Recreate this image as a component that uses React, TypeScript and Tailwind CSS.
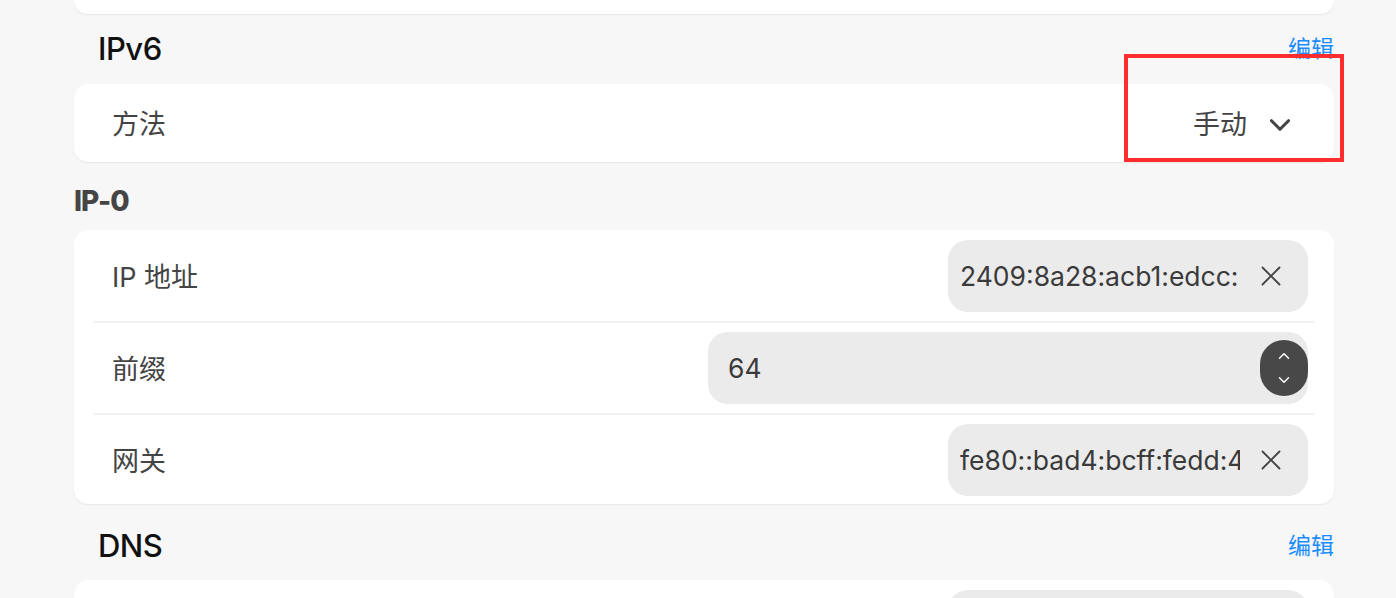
import { ChevronDown, ChevronUp, X } from "lucide-react";

const font = { fontFamily: 'Inter, "Noto Sans CJK SC", sans-serif' };

function SectionHeader({ title, action }: { title: string; action?: string }) {
  return (
    <div className="flex items-center justify-between pl-6">
      <h2 className="text-[31px] font-medium text-[#111] tracking-[-0.5px]">{title}</h2>
      {action && <button className="text-[23px] text-[#1a8cff]">{action}</button>}
    </div>
  );
}

function TextField({ value }: { value: string }) {
  return (
    <div className="flex h-[72px] w-[360px] items-center rounded-[20px] bg-[#ebebeb] pl-3">
      <span className="w-[280px] overflow-hidden whitespace-nowrap pt-[2px] text-[26.5px] text-[#3a3a3a]">{value}</span>
      <X className="ml-[14px] h-[34px] w-[34px] shrink-0 text-[#444]" strokeWidth={1.3} />
    </div>
  );
}

export default function App() {
  return (
    <div className="h-[598px] overflow-hidden bg-[#f7f7f7]" style={font}>
      <div className="ml-[74px] w-[1260px]">
        {/* tail of the card above */}
        <div className="h-[14px] rounded-b-[14px] bg-white shadow-[0_1px_2px_rgba(0,0,0,0.07)]" />

        <div className="flex h-[70px] items-center">
          <div className="flex-1">
            <SectionHeader title="IPv6" action="编辑" />
          </div>
        </div>

        <div className="flex h-[78px] items-center justify-between rounded-[14px] bg-white pl-[38px] pr-[37px] pt-[4px] shadow-[0_1px_2px_rgba(0,0,0,0.07)]">
          <span className="text-[27px] text-[#444]">方法</span>
          <div className="flex items-center gap-4 text-[27px] text-[#444]">
            <span>手动</span>
            <ChevronDown className="h-[34px] w-[34px]" strokeWidth={2.2} />
          </div>
        </div>

        <div className="flex h-[68px] items-center pt-[10px]">
          <h3 className="text-[28px] font-extrabold tracking-[-1px] text-[#454545]">IP-0</h3>
        </div>

        <div className="rounded-[14px] bg-white px-5 pt-[10px] pb-[8px] shadow-[0_1px_2px_rgba(0,0,0,0.07)]">
          <div className="flex items-center justify-between border-b-2 border-[#f1f1f1] pb-[9px] pl-[18px] pr-[6px]">
            <span className="pt-[4px] text-[27px] text-[#444]">IP 地址</span>
            <TextField value="2409:8a28:acb1:edcc:" />
          </div>
          <div className="flex items-center justify-between border-b-2 border-[#f1f1f1] py-[9px] pl-[18px] pr-[6px]">
            <span className="pt-[4px] text-[27px] text-[#444]">前缀</span>
            <div className="flex h-[72px] w-[600px] items-center justify-between rounded-[20px] bg-[#ebebeb] pl-5">
              <span className="pt-[2px] text-[26.5px] text-[#3a3a3a]">64</span>
              <div className="flex h-[56px] w-[48px] flex-col items-center justify-center gap-[6px] rounded-full bg-[#484848] text-white">
                <ChevronUp className="h-[18px] w-[18px]" strokeWidth={2} />
                <ChevronDown className="h-[18px] w-[18px]" strokeWidth={2} />
              </div>
            </div>
          </div>
          <div className="flex items-center justify-between pt-[9px] pl-[18px] pr-[6px]">
            <span className="pt-[4px] text-[27px] text-[#444]">网关</span>
            <TextField value="fe80::bad4:bcff:fedd:4" />
          </div>
        </div>

        <div className="flex h-[76px] items-center pt-[8px]">
          <div className="flex-1">
            <SectionHeader title="DNS" action="编辑" />
          </div>
        </div>

        <div className="rounded-[14px] bg-white px-5 pt-[10px] shadow-[0_1px_2px_rgba(0,0,0,0.07)]">
          <div className="flex justify-end pr-[6px]">
            <div className="h-[72px] w-[360px] rounded-[20px] bg-[#ebebeb]" />
          </div>
        </div>
      </div>

      {/* annotation box */}
      <div className="pointer-events-none absolute left-[1124px] top-[54px] h-[108px] w-[220px] border-4 border-[#ff2d2d]" />
    </div>
  );
}
